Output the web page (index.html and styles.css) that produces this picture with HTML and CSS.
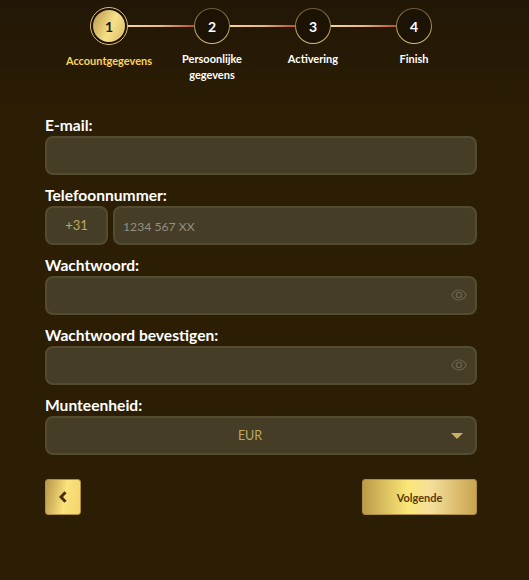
FILE: index.html
```html
<!DOCTYPE html>
<html lang="nl">
<head>
    <meta charset="UTF-8">
    <title>Registreren</title>
    <link rel="stylesheet" href="styles.css">
</head>
<body>
    <!-- Stappen -->
    <div class="stepper">
        <div class="step-row">
            <span class="circle active">1</span>
            <span class="line first"></span>
            <span class="circle">2</span>
            <span class="line"></span>
            <span class="circle">3</span>
            <span class="line"></span>
            <span class="circle">4</span>
        </div>
        <div class="label-row">
            <span class="step-label active">Accountgegevens</span>
            <span class="step-label">Persoonlijke gegevens</span>
            <span class="step-label">Activering</span>
            <span class="step-label">Finish</span>
        </div>
    </div>

    <form class="form">
        <label class="field-label" for="email">E-mail:</label>
        <input class="input" type="email" id="email">

        <label class="field-label" for="phone">Telefoonnummer:</label>
        <div class="phone-row">
            <div class="input prefix">+31</div>
            <input class="input phone" type="text" id="phone" placeholder="1234 567 XX">
        </div>

        <label class="field-label" for="password">Wachtwoord:</label>
        <div class="input-wrap">
            <input class="input" type="password" id="password">
            <svg class="eye" viewBox="0 0 16 12" width="16" height="12">
                <path d="M.7 6C2.500 2.700 5 1 8 1s5.500 1.700 7.300 5C13.500 9.300 11 11 8 11S2.500 9.300.7 6z" fill="none" stroke="#6b6147" stroke-width="1.200"/>
                <circle cx="8" cy="6" r="2.600" fill="none" stroke="#6b6147" stroke-width="1.400"/>
            </svg>
        </div>

        <label class="field-label" for="password2">Wachtwoord bevestigen:</label>
        <div class="input-wrap">
            <input class="input" type="password" id="password2">
            <svg class="eye" viewBox="0 0 16 12" width="16" height="12">
                <path d="M.7 6C2.500 2.700 5 1 8 1s5.500 1.700 7.300 5C13.500 9.300 11 11 8 11S2.500 9.300.7 6z" fill="none" stroke="#6b6147" stroke-width="1.200"/>
                <circle cx="8" cy="6" r="2.600" fill="none" stroke="#6b6147" stroke-width="1.400"/>
            </svg>
        </div>

        <label class="field-label" for="currency">Munteenheid:</label>
        <div class="input select" id="currency">
            EUR
            <span class="arrow"></span>
        </div>

        <div class="buttons">
            <button class="btn back" type="button">
                <svg viewBox="0 0 8 12" width="8" height="12">
                    <path d="M6.500 1.200 2 6l4.500 4.800" fill="none" stroke="#4a2f05" stroke-width="3"/>
                </svg>
            </button>
            <button class="btn next" type="button">Volgende</button>
        </div>
    </form>
</body>
</html>
```

FILE: styles.css
```css
body {
    margin: 0;
    height: 580px;
    overflow: hidden;
    background: linear-gradient(#221606, #2c1e04 120px);
    font-family: "Lato", "Noto Sans", sans-serif;
    color: #fff;
}

/* Stappen */
.stepper {
    padding-top: 7px;
}
.step-row {
    display: flex;
    align-items: center;
    margin-left: 90px;
}
.circle {
    width: 34px;
    height: 34px;
    border: 1px solid transparent;
    border-radius: 50%;
    background: linear-gradient(#1d1305, #1d1305) padding-box, linear-gradient(#6b5a38, #d8bd7a) border-box;
    display: flex;
    align-items: center;
    justify-content: center;
    font-size: 14px;
    font-weight: 700;
}
.circle.active {
    width: 32px;
    height: 32px;
    border: 2px solid #1a1004;
    outline: 1px solid #d8bd7a;
    outline-offset: 0;
    margin: 1px;
    background: linear-gradient(115deg, #b8964a, #f7e08a 55%, #d9bb66);
    color: #24180a;
}
.line {
    width: 65px;
    height: 2px;
    background: linear-gradient(90deg, #f3d795, #e8b884 50%, #b4532a);
}
.line.first {
    width: 66px;
}
.label-row {
    display: flex;
    margin: 6px 0 0 58.5px;
}
.step-label {
    width: 101px;
    font-size: 11px;
    line-height: 16px;
    font-weight: 700;
    text-align: center;
    box-sizing: border-box;
    padding: 0 18px;
}
.step-label.active {
    color: #fbd15f;
    padding: 2px 0 0;
    margin-right: 2px;
}

/* Форма */
.form {
    margin: 32px 52px 0 45px;
}
.field-label {
    display: block;
    font-size: 15.6px;
    line-height: 20px;
    font-weight: 700;
    margin-bottom: 1px;
}
.input {
    display: block;
    box-sizing: border-box;
    width: 100%;
    height: 39px;
    margin-bottom: 10px;
    padding: 0 8px;
    background-color: #463d27;
    border: 2px solid #544b30;
    border-radius: 8px;
    font-family: inherit;
    font-size: 13px;
    color: #bda95f;
}
.input::placeholder {
    color: #918f80;
    opacity: 1;
    font-size: 12.2px;
}
.phone-row {
    display: flex;
    gap: 5px;
}
.prefix {
    width: 63px;
    flex-shrink: 0;
    line-height: 35px;
    text-align: center;
}
.input.phone {
    flex: 1;
    width: auto;
}
.input-wrap {
    position: relative;
}
.eye {
    position: absolute;
    right: 10px;
    top: 13px;
}
.select {
    display: flex;
    align-items: center;
    justify-content: center;
    position: relative;
    padding-right: 30px;
    font-size: 12.5px;
}
.arrow {
    position: absolute;
    right: 12px;
    top: 15px;
    border-left: 6px solid transparent;
    border-right: 6px solid transparent;
    border-top: 6px solid #c9b063;
}
.buttons {
    display: flex;
    justify-content: space-between;
    margin-top: 24px;
}
.btn {
    height: 36px;
    padding: 0;
    border: 1px solid #b08f45;
    border-radius: 3px;
    font-family: inherit;
    cursor: pointer;
    color: #5a3a08;
}
.back {
    width: 36px;
    display: flex;
    align-items: center;
    justify-content: center;
    background: linear-gradient(100deg, #b8964a, #fbe27c 55%, #f3d46c);
}
.next {
    width: 115px;
    font-size: 11px;
    font-weight: 700;
    background: linear-gradient(90deg, #bd9a48, #fbe878 40%, #f5df9b 60%, #c9a54f);
}
```
